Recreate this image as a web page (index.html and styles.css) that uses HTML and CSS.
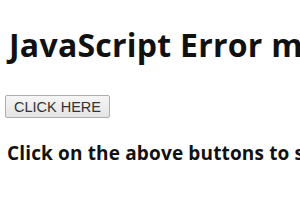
FILE: index.html
```html
<!DOCTYPE html>
<html lang="en">
<head>
  <meta charset="UTF-8" />
  <title>JavaScript Error message</title>
  <link rel="stylesheet" href="styles.css">
</head>
<body>
  <h1 class="title">JavaScript Error message</h1>
  <button class="click-btn" onclick="showError()">CLICK HERE</button>
  <p class="hint">Click on the above buttons to see the error message</p>

  <script>
    function showError() {
      try {
        undefinedFunction();
      } catch (e) {
        document.querySelector('.hint').innerText = e.name + ': ' + e.message;
      }
    }
  </script>
</body>
</html>
```

FILE: styles.css
```css
html, body {
  margin: 0;
  padding: 0;
  background: #fff;
  overflow: hidden;
}

body {
  padding: 0 7px;
  font-family: "Open Sans", sans-serif;
  color: #111;
  white-space: nowrap;
}

.title {
  margin: 0 0 0 2px;
  padding-top: 26px;
  font-size: 32px;
  font-weight: 700;
  line-height: 38px;
  letter-spacing: 0.25px;
}

.click-btn {
  display: block;
  margin: 31px 0 0 -2px;
  width: 105px;
  height: 23px;
  padding: 0;
  font-family: "Liberation Sans", Arial, sans-serif;
  font-size: 14.5px;
  color: #333;
  background: linear-gradient(#f6f6f6, #e4e4e4);
  border: 1px solid #adadad;
  border-radius: 2px;
}

.hint {
  margin: 23px 0 0;
  font-size: 19px;
  font-weight: 700;
  line-height: 24px;
  letter-spacing: 0.15px;
}
```
